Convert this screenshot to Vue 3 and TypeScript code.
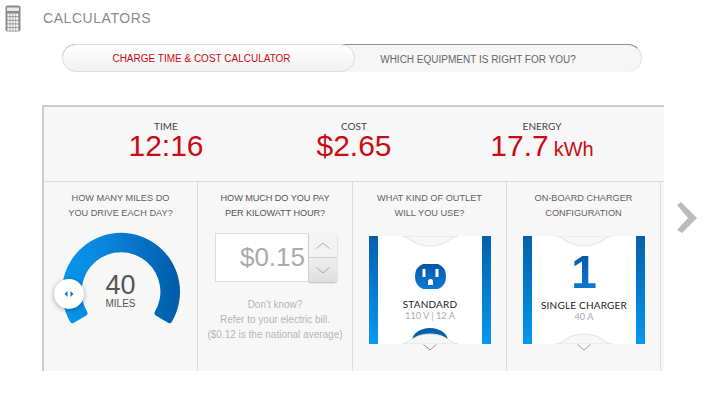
<script setup lang="ts">
interface Stat {
  label: string;
  value: string;
  unit?: string;
}

const stats: Stat[] = [
  { label: 'TIME', value: '12:16' },
  { label: 'COST', value: '$2.65' },
  { label: 'ENERGY', value: '17.7', unit: 'kWh' },
];

const calcCells = Array.from({ length: 20 }, (_, i) => ({
  x: 2.4 + (i % 4) * 2.9,
  y: 8.5 + Math.floor(i / 4) * 3.6,
}));
</script>

<template>
  <div class="page">
    <header class="head">
      <svg class="calc" width="16" height="27" viewBox="0 0 16 27">
        <rect x="0.5" y="0.5" width="15" height="26" rx="2" fill="#8a8a8a" />
        <rect x="2" y="2.5" width="12" height="3.5" fill="#e8e8e8" />
        <rect v-for="(c, i) in calcCells" :key="i" :x="c.x" :y="c.y" width="2.3" height="2.8" fill="#f2f2f2" />
      </svg>
      <h1 class="title">CALCULATORS</h1>
    </header>

    <nav class="tabs">
      <div class="tab active">CHARGE TIME &amp; COST CALCULATOR</div>
      <div class="tab">WHICH EQUIPMENT IS RIGHT FOR YOU?</div>
    </nav>

    <div class="main">
      <section class="panel">
        <div class="stats">
          <div v-for="s in stats" :key="s.label" class="stat">
            <div class="stat-label">{{ s.label }}</div>
            <div class="stat-value">{{ s.value }}<span v-if="s.unit" class="unit">{{ s.unit }}</span></div>
          </div>
        </div>

        <div class="cols">
          <div class="col">
            <p class="q">HOW MANY MILES DO<br />YOU DRIVE EACH DAY?</p>
            <div class="gauge">
              <svg width="153" height="110" viewBox="0 0 153 110">
                <defs>
                  <linearGradient id="arcGrad" x1="0" y1="0" x2="1" y2="0">
                    <stop offset="0" stop-color="#0796ee" />
                    <stop offset="0.35" stop-color="#0a86dc" />
                    <stop offset="1" stop-color="#015ba8" />
                  </linearGradient>
                </defs>
                <path
                  d="M26 88.500 A59 59 0 1 1 128 88.500 Q127 91 124.500 90 L112.500 83 Q110 81.500 110.500 79.500 A39.400 39.400 0 1 0 43.500 79.500 Q44 81.500 41.500 83 L29.500 90 Q27 91 26 88.500 Z"
                  fill="url(#arcGrad)"
                />
              </svg>
              <div class="gauge-val">
                <div class="miles">40</div>
                <div class="miles-label">MILES</div>
              </div>
              <div class="knob">
                <svg width="10" height="6" viewBox="0 0 10 6">
                  <path d="M3.500 0 L0.500 3 L3.500 6 Z M6.500 0 L9.500 3 L6.500 6 Z" fill="#0a78cf" />
                </svg>
              </div>
            </div>
          </div>

          <div class="col">
            <p class="q tight">HOW MUCH DO YOU PAY<br />PER KILOWATT HOUR?</p>
            <div class="price">
              <div class="price-box">$0.15</div>
              <div class="steppers">
                <div class="step">
                  <svg width="14" height="7" viewBox="0 0 14 7"><path d="M0.500 6.500 L7 1 L13.500 6.500" fill="none" stroke="#aaa" /></svg>
                </div>
                <div class="step down">
                  <svg width="14" height="7" viewBox="0 0 14 7"><path d="M0.500 0.500 L7 6 L13.500 0.500" fill="none" stroke="#aaa" /></svg>
                </div>
              </div>
            </div>
            <p class="hint">Don't know?<br />Refer to your electric bill.<br />($0.12 is the national average)</p>
          </div>

          <div class="col">
            <p class="q">WHAT KIND OF OUTLET<br />WILL YOU USE?</p>
            <div class="card">
              <svg class="outlet" width="31" height="25" viewBox="0 0 31 25">
                <defs>
                  <linearGradient id="outletGrad" x1="0" y1="0" x2="0" y2="1">
                    <stop offset="0" stop-color="#0358a8" />
                    <stop offset="1" stop-color="#0a7ad6" />
                  </linearGradient>
                </defs>
                <path d="M8 0 H23 Q31 3 31 12.500 Q31 22 23 25 H8 Q0 22 0 12.500 Q0 3 8 0 Z" fill="url(#outletGrad)" />
                <rect x="7.500" y="5" width="3" height="8" fill="#fff" />
                <rect x="20.500" y="5" width="3" height="8" fill="#fff" />
                <path d="M13 21 V17.500 A2.500 2.500 0 0 1 18 17.500 V21 Z" fill="#fff" />
              </svg>
              <div class="card-name">STANDARD</div>
              <div class="card-sub">110 V | 12 A</div>
              <div class="peek"></div>
              <svg class="notch top" width="56" height="11" viewBox="0 0 56 11">
                <path d="M0 0 C8 1 12 10 28 10 C44 10 48 1 56 0 Z" fill="#f7f7f7" stroke="#e2e2e2" />
              </svg>
              <svg class="notch bottom" width="56" height="11" viewBox="0 0 56 11">
                <path d="M0 11 C8 10 12 1 28 1 C44 1 48 10 56 11 Z" fill="#f7f7f7" stroke="#e2e2e2" />
              </svg>
            </div>
            <svg class="more" width="14" height="7" viewBox="0 0 14 7"><path d="M0.500 0.500 L7 6 L13.500 0.500" fill="none" stroke="#999" /></svg>
          </div>

          <div class="col">
            <p class="q">ON-BOARD CHARGER<br />CONFIGURATION</p>
            <div class="card">
              <div class="one">1</div>
              <div class="card-name">SINGLE CHARGER</div>
              <div class="card-sub">40 A</div>
              <svg class="notch top" width="56" height="11" viewBox="0 0 56 11">
                <path d="M0 0 C8 1 12 10 28 10 C44 10 48 1 56 0 Z" fill="#f7f7f7" stroke="#e2e2e2" />
              </svg>
              <svg class="notch bottom" width="56" height="11" viewBox="0 0 56 11">
                <path d="M0 11 C8 10 12 1 28 1 C44 1 48 10 56 11 Z" fill="#f7f7f7" stroke="#e2e2e2" />
              </svg>
            </div>
            <svg class="more" width="14" height="7" viewBox="0 0 14 7"><path d="M0.500 0.500 L7 6 L13.500 0.500" fill="none" stroke="#999" /></svg>
          </div>
        </div>
      </section>

      <svg class="next" width="20" height="32" viewBox="0 0 20 32">
        <path d="M4 0 L20 16 L5 31 L0 28 L11 16 L0 3 Z" fill="#bbb" />
      </svg>
    </div>
  </div>
</template>

<style scoped>
.page {
  width: 720px;
  height: 401px;
  overflow: hidden;
  background: #fff;
  font-family: "Liberation Sans", Arial, sans-serif;
}

.head {
  display: flex;
  align-items: flex-start;
  height: 44px;
  padding: 5px 0 0 5px;
  box-sizing: border-box;
}

.title {
  margin: 5px 0 0 22px;
  font-size: 14px;
  line-height: 16px;
  font-weight: normal;
  letter-spacing: 0.55px;
  color: #8a8a8a;
}

.tabs {
  display: flex;
  width: 580px;
  height: 28px;
  margin-left: 62px;
  border-radius: 14px;
  background: #f6f6f6;
  border-top: 1px solid #8e8e8e;
  border-right: 1px solid #ddd;
  box-sizing: border-box;
}

.tab {
  flex: 1;
  display: flex;
  align-items: center;
  justify-content: center;
  font-size: 10px;
  color: #666;
  padding: 1px 40px 0 0;
}

.tab.active {
  flex: 0 0 293px;
  margin-top: -1px;
  padding: 1px 14px 0 0;
  box-sizing: border-box;
  color: #cc0a14;
  border: 1px solid #ddd;
  border-radius: 14px;
  background: linear-gradient(#fff, #f1f1f1);
}

.main {
  display: flex;
  align-items: flex-start;
  margin: 33px 0 0 42px;
}

.panel {
  flex: 0 0 622px;
  height: 266px;
  box-sizing: border-box;
  background: #f7f7f7;
  border-top: 2px solid #ccc;
  border-left: 2px solid #ccc;
}

.stats {
  display: flex;
  height: 75px;
  padding: 14px 0 0 28px;
  box-sizing: border-box;
  border-bottom: 1px solid #ddd;
}

.stat {
  flex: 0 0 188px;
  text-align: center;
}

.stat-label {
  font-family: Lato, sans-serif;
  font-size: 10px;
  line-height: 10px;
  color: #444;
}

.stat-value {
  margin-top: -1px;
  font-size: 30px;
  line-height: 32px;
  color: #cc0a14;
  white-space: nowrap;
}

.unit {
  margin-left: 5px;
  font-size: 20px;
}

.cols {
  display: flex;
  height: 189px;
}

.col {
  position: relative;
  flex: 0 0 154px;
  box-sizing: border-box;
  border-right: 1px solid #ddd;
  text-align: center;
}

.col:first-child {
  flex-basis: 153px;
}

.col:nth-child(2) {
  flex-basis: 155px;
}

.q {
  margin: 0;
  padding-top: 9px;
  font-size: 9.2px;
  line-height: 15px;
  color: #5f5f5f;
}

.q.tight {
  letter-spacing: -0.1px;
  color: #555;
}

.gauge {
  position: relative;
  height: 110px;
  margin-top: 12px;
}

.gauge svg {
  display: block;
  overflow: visible;
}

.gauge-val {
  position: absolute;
  left: 0;
  right: 0;
  top: 39px;
  color: #555;
}

.miles {
  font-size: 27px;
  line-height: 26px;
}

.miles-label {
  font-size: 10px;
  line-height: 12px;
}

.knob {
  position: absolute;
  left: 10px;
  top: 46px;
  width: 30px;
  height: 30px;
  display: flex;
  align-items: center;
  justify-content: center;
  border-radius: 50%;
  background: #fff;
  box-shadow: 0 1px 5px rgba(0, 0, 0, 0.35);
}

.knob svg {
  display: block;
}

.price {
  display: flex;
  width: 122px;
  height: 49px;
  margin: 12px 0 0 17px;
}

.price-box {
  flex: 1;
  box-sizing: border-box;
  border: 1px solid #ddd;
  background: #fff;
  font-size: 26px;
  line-height: 47px;
  color: #aaa;
  text-align: right;
  padding-right: 3px;
}

.steppers {
  flex: 0 0 28px;
  display: flex;
  flex-direction: column;
  border-radius: 0 3px 3px 0;
  overflow: hidden;
  box-shadow: 0 1px 2px rgba(0, 0, 0, 0.25);
}

.step {
  flex: 1;
  display: flex;
  align-items: center;
  justify-content: center;
  background: #f3f3f3;
}

.step.down {
  background: linear-gradient(#efefef, #dedede);
  border-top: 1px solid #ccc;
}

.hint {
  margin: 15px 0 0;
  font-size: 10px;
  line-height: 15px;
  color: #b5b5b5;
}

.card {
  position: relative;
  width: 122px;
  height: 108px;
  margin: 15px 0 0 16px;
  box-sizing: border-box;
  padding: 0 9px;
  overflow: hidden;
  background: linear-gradient(#0460ae, #0798f0) left / 9px 100% no-repeat,
    linear-gradient(#0460ae, #0798f0) right / 9px 100% no-repeat,
    #fff;
}

.outlet {
  display: block;
  margin: 28px auto 0;
}

.one {
  margin-top: 16px;
  height: 40px;
  font-size: 46px;
  line-height: 40px;
  font-weight: bold;
  background: linear-gradient(#0358a8, #0a7ad6);
  -webkit-background-clip: text;
  background-clip: text;
  color: transparent;
}

.card-name {
  margin-top: 9px;
  font-family: Lato, sans-serif;
  font-size: 10px;
  line-height: 12px;
  letter-spacing: 0.2px;
  color: #222;
}

.one + .card-name {
  margin-top: 7px;
}

.card-sub {
  font-family: Lato, sans-serif;
  font-size: 9.2px;
  line-height: 12px;
  color: #aaa;
}

.notch {
  position: absolute;
  left: 50%;
  margin-left: -28px;
  display: block;
}

.notch.top {
  top: 0;
}

.notch.bottom {
  bottom: 0;
}

.peek {
  position: absolute;
  left: 50%;
  bottom: -10px;
  width: 36px;
  height: 26px;
  margin-left: -18px;
  border-radius: 50%;
  background: #0460ae;
}

.more {
  display: block;
  margin: 0 auto;
  position: relative;
  top: 0;
}

.next {
  margin: 97px 0 0 13px;
}
</style>
